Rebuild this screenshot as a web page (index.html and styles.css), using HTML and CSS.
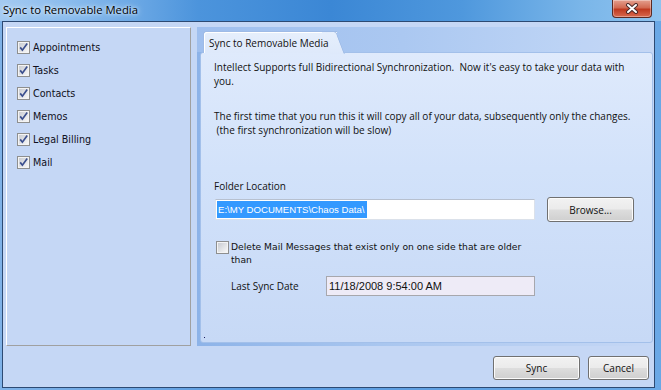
FILE: index.html
```html
<!DOCTYPE html>
<html>
<head>
    <meta charset="UTF-8">
    <title>Sync to Removable Media</title>
    <link rel="stylesheet" href="styles.css">
</head>
<body>
    <svg class="defs" width="0" height="0">
        <defs>
            <linearGradient id="boxfill" x1="0" y1="0" x2="1" y2="1">
                <stop offset="0" stop-color="#c9ccd2"/>
                <stop offset="1" stop-color="#f7f7f7"/>
            </linearGradient>
            <symbol id="box" viewBox="0 0 13 13">
                <rect x="0.5" y="0.5" width="12" height="12" fill="#f4f4f4" stroke="#8e8f8f"/>
                <rect x="2" y="2" width="9" height="9" fill="url(#boxfill)"/>
            </symbol>
            <symbol id="tick" viewBox="0 0 13 13">
                <path d="M3.2 6.4 L5.4 9.2 L10.2 2.6" fill="none" stroke="#3b4f8e" stroke-width="1.7"/>
            </symbol>
        </defs>
    </svg>

    <div class="window">
        <div class="titlebar">
            <span class="title">Sync to Removable Media</span>
            <div class="close">
                <svg width="14" height="11" viewBox="0 0 14 11">
                    <path d="M3 2 L11 9 M11 2 L3 9" stroke="#4a2a2a" stroke-width="4" stroke-linecap="round"/>
                    <path d="M3 2 L11 9 M11 2 L3 9" stroke="#fff" stroke-width="2" stroke-linecap="round"/>
                </svg>
            </div>
        </div>

        <div class="client">
            <div class="main">
                <div class="sidebar">
                    <label class="item"><svg class="check"><use href="#box"/><use href="#tick"/></svg>Appointments</label>
                    <label class="item"><svg class="check"><use href="#box"/><use href="#tick"/></svg>Tasks</label>
                    <label class="item"><svg class="check"><use href="#box"/><use href="#tick"/></svg>Contacts</label>
                    <label class="item"><svg class="check"><use href="#box"/><use href="#tick"/></svg>Memos</label>
                    <label class="item"><svg class="check"><use href="#box"/><use href="#tick"/></svg>Legal Billing</label>
                    <label class="item"><svg class="check"><use href="#box"/><use href="#tick"/></svg>Mail</label>
                </div>

                <div class="tabs">
                    <div class="tabstrip">
                        <div class="tab">Sync to Removable Media</div>
                    </div>
                    <div class="panel">
                        <p class="intro">Intellect Supports full Bidirectional Synchronization.&nbsp; Now it's easy to take your data with you.</p>
                        <p class="intro">The first time that you run this it will copy all of your data, subsequently only the changes.<br>&nbsp;(the first synchronization will be slow)</p>

                        <div class="field-label">Folder Location</div>
                        <div class="folder-row">
                            <div class="textbox"><span class="selected">E:\MY DOCUMENTS\Chaos Data\</span></div>
                            <button class="btn browse">Browse...</button>
                        </div>

                        <label class="delete-row">
                            <svg class="check"><use href="#box"/></svg>
                            <span>Delete Mail Messages that exist only on one side that are older than</span>
                        </label>

                        <div class="date-row">
                            <span class="date-label">Last Sync Date</span>
                            <div class="datebox">11/18/2008 9:54:00 AM</div>
                        </div>
                    </div>
                </div>
            </div>

            <div class="footer">
                <button class="btn sync">Sync</button>
                <button class="btn cancel">Cancel</button>
            </div>
        </div>
    </div>
</body>
</html>
```

FILE: styles.css
```css
* {
    box-sizing: border-box;
}

body {
    margin: 0;
    font-family: "Open Sans", "Liberation Sans", sans-serif;
    color: #111;
}

.defs {
    position: absolute;
}

.window {
    width: 661px;
    height: 390px;
    display: flex;
    flex-direction: column;
    background: linear-gradient(90deg, #7fb2e8 0%, #5a9be0 40%, #6aa8e6 100%);
}

.titlebar {
    height: 21px;
    display: flex;
    align-items: flex-start;
    justify-content: space-between;
    background: linear-gradient(90deg, #a4caf1 0%, #86b9ec 12%, #4c94dc 30%, #3b87d5 50%, #4f98dd 70%, #7ab6e9 88%, #8fc3ef 100%);
}

.title {
    padding: 2px 0 0 3px;
    font-size: 11.3px;
    line-height: 16px;
    color: #000;
    text-shadow: 0 0 6px #e6f1fc, 0 0 3px #e6f1fc;
}

.close {
    width: 40px;
    height: 18px;
    margin-right: 9px;
    display: flex;
    align-items: center;
    justify-content: center;
    border: 1px solid #5b2a24;
    border-top: none;
    border-radius: 0 0 4px 4px;
    background: linear-gradient(#e4a08f 0%, #d26a52 45%, #bf3a20 55%, #d8694f 100%);
    box-shadow: inset 0 0 0 1px rgba(255,255,255,0.35);
}

.client {
    flex: 1;
    margin: 0 6px 2px 2px;
    padding: 5px 1px 0 3px;
    border: 1px solid #2d4a73;
    background: #c5d7f5;
    display: flex;
    flex-direction: column;
}

.main {
    height: 319px;
    display: flex;
    gap: 6px;
}

.check {
    width: 13px;
    height: 13px;
    flex: none;
}

.sidebar {
    width: 185px;
    padding: 8px 0 0 10px;
    border: 1px solid #a0a0a0;
    border-left-color: #fff;
    border-top-color: #fff;
    display: flex;
    flex-direction: column;
}

.item {
    height: 23px;
    display: flex;
    align-items: center;
    gap: 3px;
    font-family: "DejaVu Sans", sans-serif;
    font-size: 9.6px;
    color: #101020;
}

.tabs {
    flex: 1;
    display: flex;
    flex-direction: column;
    padding: 0 0 3px 3px;
    background: linear-gradient(90deg, #8db3e8 0%, #a9c6ef 40%, #c5d7f5 100%);
}

.tabstrip {
    height: 25px;
    margin-left: -3px;
    padding: 4px 0 0 6px;
    display: flex;
    background: linear-gradient(90deg, #9fbfee 0%, #abc8f1 45%, #bcd3f5 80%, #c5d7f5 100%);
}

.tab {
    position: relative;
    z-index: 1;
    height: 22px;
    padding: 4px 0 0 5px;
    width: 134px;
    font-size: 10px;
    line-height: 14px;
    border: 1px solid #9fbbe6;
    border-right: none;
    border-bottom: none;
    border-radius: 3px 0 0 0;
    background: linear-gradient(#e6effc, #dee9fb);
    box-shadow: inset 1px 1px 0 #fff;
}

.tab::after {
    content: "";
    position: absolute;
    top: -1px;
    right: -8px;
    width: 14px;
    height: 22px;
    border-top: 1px solid #9fbbe6;
    border-right: 1px solid #9fbbe6;
    border-radius: 0 3px 0 0;
    background: linear-gradient(#e6effc, #dee9fb);
    transform: skewX(21deg);
    transform-origin: bottom left;
    z-index: -1;
}

.panel {
    position: relative;
    flex: 1;
    padding: 7px 0 0 13px;
    border: 1px solid #a3c0ea;
    border-radius: 3px;
    background: linear-gradient(#dfeafc 0%, #d2e2fa 40%, #c7d9f6 100%);
    font-size: 10px;
    line-height: 14px;
}

.panel::after {
    content: "";
    position: absolute;
    left: 3px;
    bottom: 4px;
    width: 1px;
    height: 1px;
    background: #1a1a5a;
}

.intro {
    margin: 0 0 21px;
    width: 430px;
}

.field-label {
    margin-top: 42px;
}

.folder-row {
    margin-top: 4px;
    display: flex;
    align-items: center;
    gap: 12px;
    padding-left: 1px;
}

.textbox {
    width: 320px;
    height: 21px;
    padding: 1px 0 0 1px;
    background: #fff;
    border: 1px solid #dbe1ea;
    border-top-color: #b7c0cf;
    font-family: "Liberation Sans", sans-serif;
    font-size: 9.6px;
    line-height: 17px;
}

.selected {
    display: inline-block;
    padding: 0 3px 0 1px;
    background: #3399ff;
    color: #fff;
}

.btn {
    height: 24px;
    padding: 0;
    border: 1px solid #707070;
    border-radius: 3px;
    background: linear-gradient(#f2f2f2 0%, #ebebeb 48%, #dddddd 52%, #cfcfcf 100%);
    box-shadow: inset 0 0 0 1px #fbfbfb;
    font-family: "Open Sans", sans-serif;
    font-size: 10px;
    color: #111;
}

.browse {
    width: 87px;
    height: 25px;
}

.delete-row {
    width: 320px;
    margin-top: 18px;
    padding-left: 2px;
    display: flex;
    align-items: flex-start;
    gap: 2px;
    font-family: "DejaVu Sans", sans-serif;
    font-size: 9.2px;
    line-height: 13px;
}

.delete-row .check {
    margin-top: 1px;
}

.date-row {
    margin-top: 10px;
    padding-left: 17px;
    display: flex;
    align-items: center;
}

.date-label {
    width: 95px;
}

.datebox {
    width: 209px;
    height: 20px;
    padding-left: 2px;
    border: 1px solid #a7a7ad;
    background: #eeebf7;
    font-family: "Liberation Sans", sans-serif;
    font-size: 11px;
    line-height: 18px;
}

.footer {
    margin-top: 10px;
    padding-right: 4px;
    display: flex;
    justify-content: flex-end;
    gap: 8px;
}

.sync {
    width: 87px;
}

.cancel {
    width: 61px;
}
```
